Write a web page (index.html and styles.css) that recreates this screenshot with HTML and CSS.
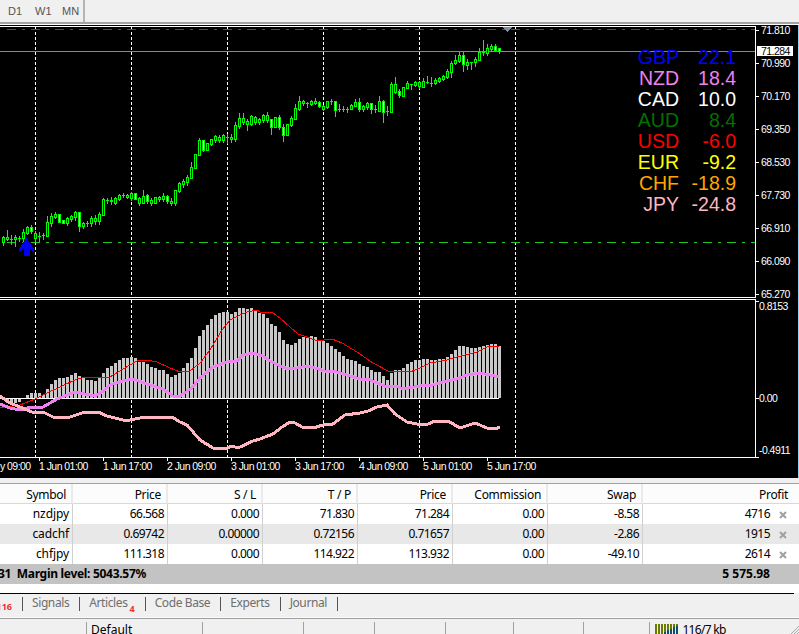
FILE: index.html
```html
<!DOCTYPE html>
<html lang="en">
<head>
    <meta charset="UTF-8">
    <title>nzdjpy, H4</title>
    <link rel="stylesheet" href="styles.css">
</head>
<body>

<div class="toolbar">
    <span class="period">D1</span>
    <span class="period">W1</span>
    <span class="period">MN</span>
</div>

<div class="chart">
    <svg id="chart" class="chart-svg" width="799" height="453" viewBox="0 25 799 453" shape-rendering="crispEdges">
        <!-- grid -->
        <g id="grid" class="grid">
            <path d="M35.5 27V297M131.5 27V297M227.5 27V297M323.5 27V297M419.5 27V297M515.5 27V297"/>
            <path d="M35.5 300V457M131.5 300V457M227.5 300V457M323.5 300V457M419.5 300V457M515.5 300V457"/>
        </g>
        <!-- levels -->
        <path class="level-tp" d="M7 29.5H755"/>
        <path class="level-price" d="M0 51.5H756"/>
        <path class="level-sl" d="M7 242.5H755"/>
        <polygon class="marker" points="502,27 512,27 507,32"/>

        <g id="candles"></g>
        <polygon class="arrow" points="26.5,238 34,249 34,252 29.5,248 29.5,256 23.5,256 23.5,248 19,252 19,249"/>

        <g id="hist"></g>
        <path class="zero" d="M0 398.5H499"/>
        <g id="lines"></g>

        <!-- frames -->
        <path class="frame" d="M0 26.5H756M755.5 26V298M0 297.5H756M0 299.5H756M755.5 299V458M0 457.5H756"/>
        <path class="frame" d="M756 30.5h3M756 63.5h3M756 96.5h3M756 129.5h3M756 162.5h3M756 195.5h3M756 228.5h3M756 261.5h3M756 294.5h3M756 301.5h3M756 398.5h3M756 457.5h3"/>
        <path class="frame" d="M39.5 458v3M103.5 458v3M167.5 458v3M231.5 458v3M295.5 458v3M359.5 458v3M423.5 458v3M487.5 458v3"/>
        <rect class="edge" x="798" y="25" width="1" height="453"/>

        <!-- price axis -->
        <g class="axis">
            <text x="761" y="34">71.810</text>
            <text x="761" y="67">70.990</text>
            <text x="761" y="100">70.170</text>
            <text x="761" y="133">69.350</text>
            <text x="761" y="166">68.530</text>
            <text x="761" y="199">67.730</text>
            <text x="761" y="232">66.910</text>
            <text x="761" y="265">66.090</text>
            <text x="761" y="298">65.270</text>
            <text x="759" y="310">0.8153</text>
            <text x="759" y="402">0.00</text>
            <text x="759" y="454">-0.4911</text>
        </g>
        <rect class="price-box" x="757" y="46" width="36" height="10"/>
        <text class="axis price-text" x="761" y="55">71.284</text>

        <!-- time axis -->
        <g class="axis">
            <text x="0" y="470">y 09:00</text>
            <text x="39" y="470">1 Jun 01:00</text>
            <text x="103" y="470">1 Jun 17:00</text>
            <text x="167" y="470">2 Jun 09:00</text>
            <text x="231" y="470">3 Jun 01:00</text>
            <text x="295" y="470">3 Jun 17:00</text>
            <text x="359" y="470">4 Jun 09:00</text>
            <text x="423" y="470">5 Jun 01:00</text>
            <text x="487" y="470">5 Jun 17:00</text>
        </g>
    </svg>

    <div class="strength">
        <span class="gbp">GBP</span><span class="gbp">22.1</span>
        <span class="nzd">NZD</span><span class="nzd">18.4</span>
        <span class="cad">CAD</span><span class="cad">10.0</span>
        <span class="aud">AUD</span><span class="aud">8.4</span>
        <span class="usd">USD</span><span class="usd">-6.0</span>
        <span class="eur">EUR</span><span class="eur">-9.2</span>
        <span class="chf">CHF</span><span class="chf">-18.9</span>
        <span class="jpy">JPY</span><span class="jpy">-24.8</span>
    </div>
</div>

<table class="trades">
    <colgroup>
        <col class="col-symbol">
        <col class="col-num"><col class="col-num"><col class="col-num">
        <col class="col-num"><col class="col-num"><col class="col-num">
        <col class="col-profit">
        <col class="col-close">
    </colgroup>
    <thead>
        <tr>
            <th>Symbol</th>
            <th>Price</th>
            <th>S / L</th>
            <th>T / P</th>
            <th>Price</th>
            <th>Commission</th>
            <th>Swap</th>
            <th colspan="2" class="last">Profit</th>
        </tr>
    </thead>
    <tbody>
        <tr>
            <td class="symbol">nzdjpy</td><td>66.568</td><td>0.000</td><td>71.830</td><td>71.284</td><td>0.00</td><td>-8.58</td><td class="profit">4716</td>
            <td class="close"><svg width="8" height="8" viewBox="0 0 8 8"><path d="M1 1L7 7M7 1L1 7"/></svg></td>
        </tr>
        <tr class="alt">
            <td class="symbol">cadchf</td><td>0.69742</td><td>0.00000</td><td>0.72156</td><td>0.71657</td><td>0.00</td><td>-2.86</td><td class="profit">1915</td>
            <td class="close"><svg width="8" height="8" viewBox="0 0 8 8"><path d="M1 1L7 7M7 1L1 7"/></svg></td>
        </tr>
        <tr>
            <td class="symbol">chfjpy</td><td>111.318</td><td>0.000</td><td>114.922</td><td>113.932</td><td>0.00</td><td>-49.10</td><td class="profit">2614</td>
            <td class="close"><svg width="8" height="8" viewBox="0 0 8 8"><path d="M1 1L7 7M7 1L1 7"/></svg></td>
        </tr>
        <tr class="total">
            <td colspan="7" class="balance">31&nbsp;&nbsp;Margin level: 5043.57%</td>
            <td class="profit">5 575.98</td><td></td>
        </tr>
    </tbody>
</table>

<div class="tabs-wrap">
    <div class="tabs">
        <span class="tab tab-first"><span class="badge">116</span></span>
        <span class="tab">Signals</span>
        <span class="tab">Articles<span class="badge badge-low">4</span></span>
        <span class="tab">Code Base</span>
        <span class="tab">Experts</span>
        <span class="tab">Journal</span>
    </div>
</div>

<div class="status">
    <span class="cell cell-1"></span>
    <span class="cell cell-2">Default</span>
    <span class="cell cell-3"></span>
    <span class="cell cell-4"></span>
    <span class="cell cell-5"></span>
    <span class="cell cell-6"></span>
    <span class="cell cell-7"></span>
    <span class="cell cell-8"></span>
    <span class="cell cell-9">
        <svg class="conn" width="24" height="10" viewBox="0 0 24 10" shape-rendering="crispEdges">
            <path class="conn-bar" d="M1 0V10M4 0V10M7 0V10M10 0V10M13 0V10M16 0V10M19 0V10M22 0V10"/>
            <path class="conn-load" d="M10 8V10M13 6V10M16 5V10M19 3V10M22 2V10"/>
        </svg>
        116/7 kb
    </span>
    <svg class="grip" width="9" height="9" viewBox="0 0 9 9">
        <path d="M9 1L1 9M9 4L4 9M9 7L7 9"/>
    </svg>
</div>

<script src="chart.js"></script>
</body>
</html>
```

FILE: styles.css
```css
*{
    margin: 0px;
    padding: 0px;
    box-sizing: border-box;
}
html, body{
    width: 799px;
    height: 634px;
    overflow: hidden;
}
body{
    background-color: #f0f0f0;
    font-family: "Noto Sans", "Open Sans", sans-serif;
    font-size: 12px;
    color: #000;
}

/*toolbar*/
.toolbar{
    height: 24px;
    margin-bottom: 1px;
    border-bottom: 2px solid #a3a3a3;
    box-shadow: 0 1px 0 #fff;
    display: flex;
    align-items: center;
    background-color: #f0f0f0;
}
.period{
    width: 27px;
    padding-left: 8px;
    font-family: "Liberation Sans", sans-serif;
    font-size: 11px;
    color: #555;
}
.toolbar .period:last-child{
    width: 31px;
    height: 22px;
    line-height: 22px;
    border-right: 2px solid #b4b4b4;
}

/*chart*/
.chart{
    position: relative;
    height: 453px;
    margin-bottom: 5px;
    background-color: #000;
}
.chart-svg{
    display: block;
}
.grid path{
    fill: none;
    stroke: #fff;
    stroke-width: 1;
    stroke-dasharray: 3 2;
}
.level-tp, .level-sl{
    fill: none;
    stroke-width: 1;
    stroke-dasharray: 9 6 3 6;
}
.level-tp{
    stroke: #e01010;
}
.level-sl{
    stroke: #1fc81f;
}
.level-price{
    stroke: #7f8a96;
    stroke-width: 1;
}
.marker{
    fill: #7f8f9f;
}
.arrow{
    fill: #0000f0;
}
.zero{
    stroke: #fff;
    stroke-width: 1;
}
.frame{
    fill: none;
    stroke: #fff;
    stroke-width: 1;
}
.edge{
    fill: #8fd3f4;
}
.axis text, .axis{
    font-family: "Liberation Sans", sans-serif;
    font-size: 10.5px;
    letter-spacing: -0.55px;
    fill: #fff;
}
.price-box{
    fill: #fff;
}
.axis.price-text{
    fill: #000;
}
.line-red{
    fill: none;
    stroke: #f00;
    stroke-width: 1;
}
.line-violet{
    fill: none;
    stroke: #ee82ee;
    stroke-width: 3;
}
.line-pink{
    fill: none;
    stroke: #ffb6c1;
    stroke-width: 3;
}

/*currency strength*/
.strength{
    position: absolute;
    top: 22px;
    left: 620px;
    width: 116px;
    display: grid;
    grid-template-columns: 59px 57px;
    font-family: "Liberation Sans", sans-serif;
    font-size: 19.5px;
    line-height: 21px;
    text-align: right;
}
.gbp{ color: #0000ff; }
.nzd{ color: #ee82ee; }
.cad{ color: #ffffff; }
.aud{ color: #007000; }
.usd{ color: #ff0000; }
.eur{ color: #ffff00; }
.chf{ color: #ffa500; }
.jpy{ color: #ffb6c1; }

/*trades*/
.trades{
    width: 799px;
    table-layout: fixed;
    border-collapse: separate;
    border-spacing: 0;
    border-top: 1px solid #a0a0a0;
    background-color: #fff;
}
.col-symbol{ width: 73px; }
.col-num{ width: 95px; }
.col-profit{ width: 132px; }
.col-close{ width: 24px; }
.trades th{
    height: 20px;
    padding: 2px 5px 0 0;
    font-weight: normal;
    letter-spacing: -0.3px;
    text-align: right;
    background-color: #fcfcfc;
    border-right: 2px solid #eaeaea;
    border-bottom: 1px solid #d9d9d9;
}
.trades th.last{
    padding-right: 11px;
    border-right: none;
}
.trades td{
    height: 20px;
    padding: 0 3px 2px 0;
    letter-spacing: -0.55px;
    text-align: right;
    white-space: nowrap;
    overflow: hidden;
    border-right: 1px solid #d0d0d0;
}
.trades td.symbol{
    letter-spacing: -0.1px;
}
.trades .alt td{
    background-color: #e8e8e8;
}
.trades td.profit{
    padding-right: 5px;
    border-right: none;
}
.trades td.close{
    padding: 2px 0 0 4px;
    border-right: none;
    text-align: left;
    line-height: 0;
}
.close path{
    fill: none;
    stroke: #a0a0a0;
    stroke-width: 2;
}
.trades .total td{
    background-color: #c3c3c3;
    border-right: none;
    font-weight: bold;
    letter-spacing: 0;
}
.trades td.balance{
    text-align: left;
    text-indent: -2px;
    letter-spacing: -0.3px;
}

/*tabs*/
.tabs-wrap{
    height: 9px;
    background-color: #fff;
}
.tabs{
    position: relative;
    top: 9px;
    height: 22px;
    margin-right: 5px;
    padding-top: 3px;
    border-top: 1px solid #000;
    display: flex;
    align-items: flex-start;
    color: #6e6e6e;
    letter-spacing: -0.4px;
}
.tab{
    height: 14px;
    line-height: 11px;
    padding: 0 10px 0 9px;
    border-right: 1px solid #555;
    white-space: nowrap;
}
.tab-first{
    width: 23px;
    padding: 0 10px 0 0;
    display: flex;
    justify-content: flex-end;
}
.badge{
    font-size: 9px;
    font-weight: bold;
    letter-spacing: 0;
    color: #f03030;
    position: relative;
    top: 4px;
}
.badge-low{
    margin-left: 2px;
    top: 5px;
}

/*status bar*/
.status{
    position: relative;
    margin-top: 25px;
    height: 17px;
    border-top: 1px solid #a0a0a0;
    border-bottom: 1px solid #444;
    box-shadow: 0 -1px 0 #fafafa;
    display: flex;
    overflow: hidden;
    padding-top: 3px;
    line-height: 14px;
}
.cell{
    flex: none;
    padding: 1px 0 0 4px;
    white-space: nowrap;
    border-left: 1px solid #a0a0a0;
}
.cell-1{ width: 86px; border-left: none; }
.cell-2{ width: 116px; }
.cell-3{ width: 101px; }
.cell-4{ width: 71px; }
.cell-5{ width: 71px; }
.cell-6{ width: 68px; }
.cell-7{ width: 70px; }
.cell-8{ width: 66px; }
.cell-9{ width: 130px; padding-left: 5px; letter-spacing: -0.7px; }
.conn{
    margin-right: 1px;
}
.conn-bar{
    fill: none;
    stroke: #6b7a00;
    stroke-width: 2;
}
.conn-load{
    fill: none;
    stroke: #0f4f6a;
    stroke-width: 2;
}
.grip{
    position: absolute;
    right: 0;
    bottom: 0;
}
.grip path{
    fill: none;
    stroke: #a8a8a8;
    stroke-width: 1;
}
```

FILE: chart.js
```js
/**
 * draws the candles, the histogram and the indicator lines
 * every value is a y pixel of the page, x = 4 * index + 3
 */
var NS = "http://www.w3.org/2000/svg";

// body top, body bottom, high, low, white body
var candles = [
    [237,242,236,245],[237,239,230,240],[239,239,235,244],[237,239,235,246],[238,238,236,241],
    [232,238,229,244],[227,233,226,234],[227,231,225,233,1],[233,238,231,242],[236,236,232,241],
    [235,235,233,239],[222,236,216,236],[216,223,213,226],[214,217,212,218],[214,222,214,222,1],
    [220,223,220,223,1],[218,223,217,225],[216,219,215,221],[212,217,211,220],[212,226,212,231,1],
    [223,226,222,228],[223,223,221,226],[218,223,216,226],[218,221,215,224],[214,221,212,224],
    [199,215,198,215],[200,200,198,203],[200,201,197,204],[198,203,197,204],[195,199,194,200],
    [195,195,193,197],[195,197,194,198],[193,198,192,200],[193,199,193,199,1],[198,203,197,205],
    [196,203,190,203],[195,201,194,203,1],[200,203,198,205],[197,203,197,203],[197,199,196,201],
    [196,199,193,201],[196,201,195,203,1],[201,203,198,205],[190,203,190,205],[183,191,182,192],
    [181,184,179,187],[177,182,175,185],[167,178,162,178],[154,168,154,168],[140,155,138,155],
    [140,150,140,151,1],[143,150,143,150],[139,144,139,145],[136,140,135,142],[137,140,135,142],
    [135,140,134,142],[137,137,134,143],[137,139,134,142],[125,139,122,141],[118,126,113,128],
    [118,122,113,124],[121,124,119,130],[116,124,115,125],[117,122,116,124],[119,122,118,124],
    [115,120,114,122],[115,120,112,122],[119,127,119,134,1],[117,127,117,127],[117,127,115,129,1],
    [127,135,124,141,1],[124,135,124,135],[118,125,116,126],[108,119,104,119],[101,109,96,110],
    [101,103,100,105],[103,103,102,107],[101,104,100,105],[101,103,98,104],[102,106,101,107,1],
    [106,109,105,110],[101,107,101,108],[101,101,99,104],[101,110,101,116,1],[109,109,104,111],
    [109,109,106,111],[109,109,107,112],[105,109,104,109],[102,106,99,106],[102,109,98,111,1],
    [106,109,105,111],[103,107,102,109],[103,109,103,113,1],[109,109,105,112],[101,111,96,111],
    [101,112,100,122,1],[111,111,106,115],[84,112,82,112],[84,92,77,93],[91,95,89,97,1],
    [87,96,87,96],[83,88,81,88],[84,84,84,89],[82,85,81,86],[82,86,81,88],
    [81,87,78,87],[82,82,76,83],[83,83,77,86],[80,83,78,84],[78,81,77,82],
    [76,79,75,80],[71,77,69,78],[63,72,61,77],[60,63,55,64],[55,61,52,62],
    [55,64,52,71,1],[62,65,59,69],[62,62,62,69],[59,62,57,66],[52,60,48,60],
    [52,52,40,55],[48,53,44,55],[46,49,44,51],[46,50,44,51,1],[48,51,48,53,1]
];

// top of each bar, below 398 it hangs under the zero line
var bars = [
    399,403,403,403,402,399,395,393,393,393,395,389,384,380,378,378,377,375,373,376,
    378,380,380,381,378,373,368,366,363,360,358,358,357,358,362,362,364,367,368,370,
    370,374,377,375,373,368,363,358,348,336,330,325,319,315,313,312,312,314,312,308,
    308,309,308,310,313,314,318,324,326,332,340,344,345,343,339,337,338,336,337,340,
    341,343,346,349,352,356,359,360,361,364,366,367,370,372,372,376,380,373,370,370,
    368,364,362,360,360,359,359,360,360,359,359,357,354,350,346,346,347,348,348,347,
    346,345,344,344,346
];

var redLine = "0,408 20,405 35,399 47,393 60,387 77,379 87,377 100,378 110,377 123,369 137,361 147,360 157,362 170,368 180,372 190,371 200,363 210,350 222,330 230,320 240,315 247,312 257,310 260,312 272,312 280,318 290,327 298,334 310,338 317,341 332,339 342,343 357,352 373,363 388,371 410,372 420,368 430,363 447,360 457,357 477,352 487,347 499,346";
var violetLine = "0,404 10,408 20,410 27,408 43,407 50,403 57,399 67,395 75,392 85,394 95,396 102,392 110,385 123,381 133,379 147,384 163,389 173,396 180,396 192,388 200,378 213,367 227,362 237,361 243,355 253,353 263,356 270,361 280,366 288,369 297,368 307,366 315,368 325,371 337,372 360,379 370,380 387,387 397,386 403,389 420,386 433,385 443,382 457,379 467,375 480,373 490,375 499,377";
var pinkLine = "0,396 10,403 20,407 32,412 43,412 53,417 70,417 82,413 98,412 107,416 123,420 130,420 140,418 157,417 172,417 180,422 187,425 200,440 213,448 225,449 232,446 238,448 253,441 260,439 273,434 282,427 290,422 295,423 302,427 313,428 323,425 333,424 345,415 360,413 368,411 377,407 387,405 395,414 407,422 417,424 428,424 435,421 448,421 460,428 475,423 487,428 495,429 500,427";

function rect(parent, x, y, w, h, color) {
    var r = document.createElementNS(NS, "rect");
    r.setAttribute("x", x);
    r.setAttribute("y", y);
    r.setAttribute("width", w);
    r.setAttribute("height", h);
    r.setAttribute("fill", color);
    parent.appendChild(r);
}

function line(parent, points, cls) {
    var p = document.createElementNS(NS, "polyline");
    p.setAttribute("points", points);
    p.setAttribute("class", cls);
    parent.appendChild(p);
}

function drawCandles() {
    var g = document.getElementById("candles");
    for (var i = 0; i < candles.length; i++) {
        var c = candles[i];
        var x = 4 * i + 3;
        rect(g, x, c[2], 1, c[3] - c[2] + 1, "#00ff00");
        rect(g, x - 1, c[0], 3, c[1] - c[0] + 1, "#00ff00");
        if (c[1] - c[0] > 1) {
            rect(g, x, c[0] + 1, 1, c[1] - c[0] - 1, c[4] ? "#ffffff" : "#000000");
        }
    }
}

function drawBars() {
    var g = document.getElementById("hist");
    for (var i = 0; i < bars.length; i++) {
        var x = 4 * i + 3;
        if (bars[i] < 398) {
            rect(g, x - 1, bars[i], 3, 398 - bars[i], "#c8c8c8");
        } else {
            rect(g, x - 1, 398, 3, bars[i] - 398, "#c8c8c8");
        }
    }
}

drawCandles();
drawBars();

var lines = document.getElementById("lines");
line(lines, redLine, "line-red");
line(lines, violetLine, "line-violet");
line(lines, pinkLine, "line-pink");
```
